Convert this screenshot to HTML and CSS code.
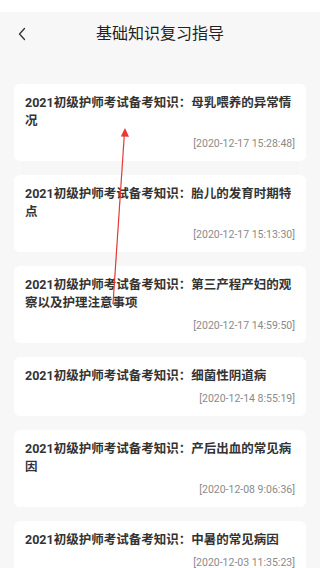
FILE: index.html
```html
<!DOCTYPE html>
<html lang="zh">
<head>
<meta charset="utf-8">
<title>基础知识复习指导</title>
<link rel="stylesheet" href="styles.css">
</head>
<body>
<div class="page">
  <div class="status"></div>
  <header class="nav">
    <span class="back"><svg width="10" height="14" viewBox="0 0 10 14"><path d="M7.5 1.5 L2.5 7 L7.5 12.5" fill="none" stroke="#333" stroke-width="1.3" stroke-linecap="round" stroke-linejoin="round"/></svg></span>
    <h1 class="nav-title">基础知识复习指导</h1>
  </header>
  <main class="list">
    <article class="card"><p class="card-title">2021初级护师考试备考知识：母乳喂养的异常情况</p><p class="card-date">[2020-12-17 15:28:48]</p></article>
    <article class="card"><p class="card-title">2021初级护师考试备考知识：胎儿的发育时期特点</p><p class="card-date">[2020-12-17 15:13:30]</p></article>
    <article class="card"><p class="card-title">2021初级护师考试备考知识：第三产程产妇的观察以及护理注意事项</p><p class="card-date">[2020-12-17 14:59:50]</p></article>
    <article class="card"><p class="card-title">2021初级护师考试备考知识：细菌性阴道病</p><p class="card-date">[2020-12-14 8:55:19]</p></article>
    <article class="card"><p class="card-title">2021初级护师考试备考知识：产后出血的常见病因</p><p class="card-date">[2020-12-08 9:06:36]</p></article>
    <article class="card"><p class="card-title">2021初级护师考试备考知识：中暑的常见病因</p><p class="card-date">[2020-12-03 11:35:23]</p></article>
  </main>
  <svg class="arrow" width="320" height="568" viewBox="0 0 320 568">
    <line x1="113" y1="304" x2="124.3" y2="135" stroke="#e53935" stroke-width="1.2"/>
    <polygon points="125,128 120.8,136.5 129,136.8" fill="#e53935"/>
  </svg>
</div>
</body>
</html>
```
FILE: styles.css
```css
html, body {
  margin: 0;
  padding: 0;
}
body {
  background: #f7f7f7;
  font-family: Roboto, "Noto Sans CJK SC", sans-serif;
  width: 320px;
  height: 568px;
  overflow: hidden;
}
.page {
  position: relative;
  width: 320px;
  height: 568px;
  overflow: hidden;
}
.status {
  height: 12px;
  background: #ffffff;
}
.nav {
  height: 44px;
  display: flex;
  align-items: center;
  justify-content: center;
  position: relative;
}
.back {
  position: absolute;
  left: 17px;
  top: 15px;
  width: 10px;
  height: 14px;
  display: flex;
}
.nav-title {
  margin: 0;
  font-size: 16px;
  font-weight: normal;
  color: #222;
  line-height: 44px;
}
.list {
  padding: 28px 14px 0;
  display: flex;
  flex-direction: column;
  gap: 14px;
}
.card {
  background: #fff;
  border-radius: 6px;
  padding: 10px 11px 9px;
}
.card-title {
  margin: 0;
  font-size: 12.5px;
  font-weight: bold;
  line-height: 18px;
  color: #333;
}
.card-date {
  margin: 6px 0 0;
  font-size: 10.5px;
  line-height: 16px;
  color: #8a8a8a;
  text-align: right;
}
.arrow {
  position: absolute;
  left: 0;
  top: 0;
  pointer-events: none;
}
```
